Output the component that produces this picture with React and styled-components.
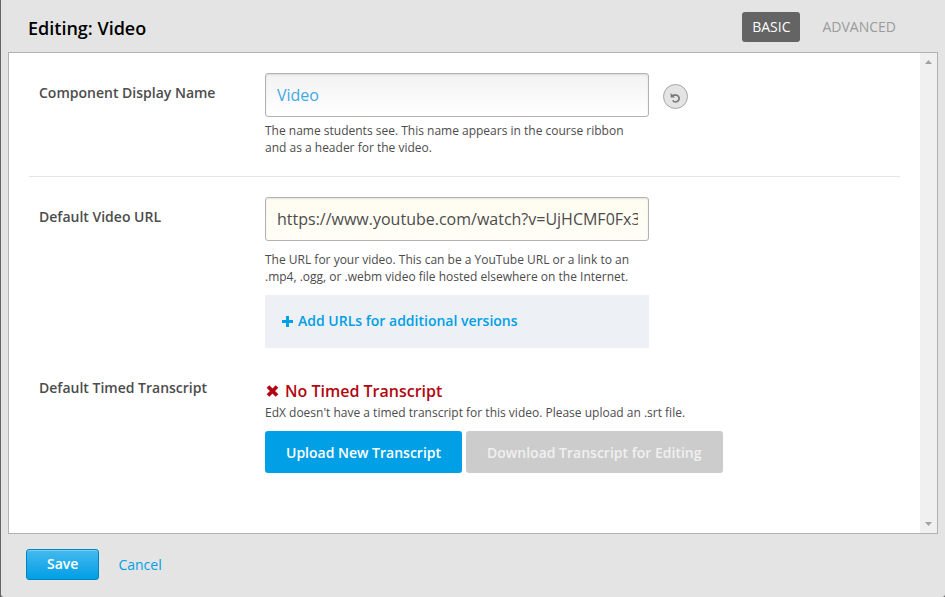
import React from "react";
import styled, { createGlobalStyle, css } from "styled-components";

const GlobalStyle = createGlobalStyle`
  *, *::before, *::after { box-sizing: border-box; }
  body {
    margin: 0;
    background: #666;
    color: #4c4c4c;
    font-family: "Open Sans", "Noto Sans", sans-serif;
    font-size: 14px;
  }
  button, input { font: inherit; }
  p, h2, h3 { margin: 0; }
`;

const Modal = styled.div`
  display: flex;
  flex-direction: column;
  min-height: 100vh;
  margin-left: 1px;
  background: #e4e4e4;
  border-radius: 0 0 3px 3px;
`;

const Header = styled.header`
  display: flex;
  align-items: flex-start;
  justify-content: space-between;
  padding: 12px 39px 8px 27px;
`;

const Title = styled.h2`
  color: #000;
  font-size: 18px;
  font-weight: 600;
  line-height: 32px;
`;

const Tabs = styled.nav`
  display: flex;
  gap: 12px;
`;

const Tab = styled.button`
  height: 30px;
  padding: 0 10px 2px;
  border: 0;
  border-radius: 3px;
  background: ${(p) => (p.$active ? "#646464" : "transparent")};
  color: ${(p) => (p.$active ? "#fff" : "#9b9b9b")};
  font-size: 14px;
  text-transform: uppercase;
  cursor: pointer;
`;

const Panel = styled.main`
  display: flex;
  flex: 1;
  margin: 0 7px;
  border: 1px solid #b2b2b2;
  background: #fff;
`;

const Settings = styled.form`
  flex: 1;
  min-width: 0;
  padding: 0 20px;
`;

const Scrollbar = styled.div`
  display: flex;
  flex-direction: column;
  justify-content: space-between;
  width: 17px;
  background: #f0f0f0;
`;

const ScrollButton = styled.button`
  display: grid;
  place-items: center;
  width: 17px;
  height: 18px;
  padding: 0;
  border: 0;
  background: transparent;
`;

const Row = styled.section`
  display: grid;
  grid-template-columns: 226px minmax(0, 1fr);
  padding: 20px 10px;
  ${(p) => p.$divided && css`border-bottom: 1px solid #e5e5e5;`}
  ${(p) => p.$tight && css`padding-top: 10px;`}
`;

const rowName = css`
  display: block;
  padding-top: ${(p) => (p.$flush ? "0" : "10px")};
  font-size: 14px;
  font-weight: 600;
  line-height: 20px;
`;

const Label = styled.label`${rowName}`;
const RowTitle = styled.h3`${rowName}`;

const FieldLine = styled.div`
  display: flex;
  align-items: center;
  gap: 14px;
`;

const TextInput = styled.input`
  width: 384px;
  height: 44px;
  padding: 0 10px 0 11px;
  border: 1px solid #b2b2b2;
  border-radius: 3px;
  outline: none;
  background: ${(p) => (p.$url ? "linear-gradient(#fffcf0, #fffdf6)" : "linear-gradient(#f2f2f2, #fff)")};
  box-shadow: inset 0 1px 2px rgba(0, 0, 0, 0.1);
  color: ${(p) => (p.$url ? "#4c4c4c" : "#3fa9e6")};
  font-size: 16px;
`;

const ResetButton = styled.button`
  display: grid;
  place-items: center;
  width: 25px;
  height: 25px;
  margin-top: 3px;
  padding: 3px 0 0;
  border: 1px solid #a5a5a5;
  border-radius: 50%;
  background: #e4e4e4;
  color: #777;
  cursor: pointer;
`;

const Help = styled.p`
  max-width: ${(p) => (p.$wide ? "none" : "376px")};
  margin-top: ${(p) => p.$gap || 0}px;
  font-size: 12px;
  line-height: 17px;
`;

const ExtraUrls = styled.div`
  width: 384px;
  max-width: 100%;
  margin-top: 10px;
  padding: 16px 17px 17px;
  background: #edf0f5;
`;

const Link = styled.a`
  display: inline-flex;
  align-items: center;
  gap: 5px;
  color: #009fe6;
  font-weight: ${(p) => (p.$strong ? 600 : 400)};
  line-height: 20px;
  text-decoration: none;
`;

const Status = styled.p`
  display: flex;
  align-items: center;
  gap: 6px;
  padding-left: 1px;
  color: #b20610;
  font-size: 16px;
  font-weight: 600;
  line-height: 26px;
`;

const Actions = styled.div`
  display: flex;
  flex-wrap: wrap;
  gap: 4px;
  margin-top: 10px;
`;

const ActionButton = styled.button`
  height: 42px;
  padding: 0 21px;
  border: 0;
  border-radius: 3px;
  background: #009fe6;
  color: #fff;
  font-size: 14px;
  font-weight: 600;
  white-space: nowrap;
  &:disabled { background: #ccc; color: #f0f0f0; }
`;

const Footer = styled.footer`
  display: flex;
  align-items: center;
  gap: 19px;
  padding: 15px 25px 17px;
`;

const SaveButton = styled.button`
  height: 31px;
  padding: 0 20px 2px;
  border: 1px solid #0083be;
  border-radius: 3px;
  background: linear-gradient(#45b9ee, #009fe6);
  box-shadow: inset 0 1px 0 #7dcff4;
  color: #fff;
  font-size: 14px;
  font-weight: 600;
  cursor: pointer;
`;

const Arrow = ({ down }) => (
  <svg width="7" height="4" viewBox="0 0 7 4" fill="#a3a3a3" aria-hidden="true">
    <path d={down ? "M0 0h7L3.5 4z" : "M0 4h7L3.5 0z"} />
  </svg>
);

const UndoIcon = () => (
  <svg width="12" height="12" viewBox="0 0 12 12" fill="none" aria-hidden="true">
    <path d="M2.5 3.1H6.5a3.5 3.5 0 1 1-3.8 5.3" stroke="currentColor" strokeWidth="1.7" />
    <path d="M.6 1v4.4H5z" fill="currentColor" />
  </svg>
);

const PlusIcon = () => (
  <svg width="11" height="11" viewBox="0 0 11 11" fill="currentColor" aria-hidden="true">
    <path d="M4 0h3v4h4v3H7v4H4V7H0V4h4z" />
  </svg>
);

const CrossIcon = () => (
  <svg width="13" height="12" viewBox="0 0 13 12" aria-hidden="true">
    <path d="M2 1.5l9 9M11 1.5l-9 9" stroke="currentColor" strokeWidth="3.8" />
  </svg>
);

export default function App() {
  return (
    <>
      <GlobalStyle />
      <Modal>
        <Header>
          <Title>Editing: Video</Title>
          <Tabs>
            <Tab type="button" $active>Basic</Tab>
            <Tab type="button">Advanced</Tab>
          </Tabs>
        </Header>
        <Panel>
          <Settings id="video-settings">
            <Row $divided>
              <Label htmlFor="display-name">Component Display Name</Label>
              <div>
                <FieldLine>
                  <TextInput id="display-name" type="text" defaultValue="Video" />
                  <ResetButton type="button" aria-label="Clear value"><UndoIcon /></ResetButton>
                </FieldLine>
                <Help $gap={5}>
                  The name students see. This name appears in the course ribbon and as a header for the video.
                </Help>
              </div>
            </Row>
            <Row>
              <Label htmlFor="video-url">Default Video URL</Label>
              <div>
                <TextInput
                  id="video-url"
                  type="text"
                  $url
                  defaultValue="https://www.youtube.com/watch?v=UjHCMF0Fx3"
                />
                <Help $gap={10}>
                  The URL for your video. This can be a YouTube URL or a link to an .mp4, .ogg, or .webm video file hosted elsewhere on the Internet.
                </Help>
                <ExtraUrls>
                  <Link href="#versions" $strong><PlusIcon />Add URLs for additional versions</Link>
                </ExtraUrls>
              </div>
            </Row>
            <Row $tight>
              <RowTitle $flush>Default Timed Transcript</RowTitle>
              <div>
                <Status><CrossIcon />No Timed Transcript</Status>
                <Help $wide>EdX doesn't have a timed transcript for this video. Please upload an .srt file.</Help>
                <Actions>
                  <ActionButton type="button">Upload New Transcript</ActionButton>
                  <ActionButton type="button" disabled>Download Transcript for Editing</ActionButton>
                </Actions>
              </div>
            </Row>
          </Settings>
          <Scrollbar>
            <ScrollButton type="button" aria-label="Scroll up"><Arrow /></ScrollButton>
            <ScrollButton type="button" aria-label="Scroll down"><Arrow down /></ScrollButton>
          </Scrollbar>
        </Panel>
        <Footer>
          <SaveButton type="submit" form="video-settings">Save</SaveButton>
          <Link href="#cancel">Cancel</Link>
        </Footer>
      </Modal>
    </>
  );
}
